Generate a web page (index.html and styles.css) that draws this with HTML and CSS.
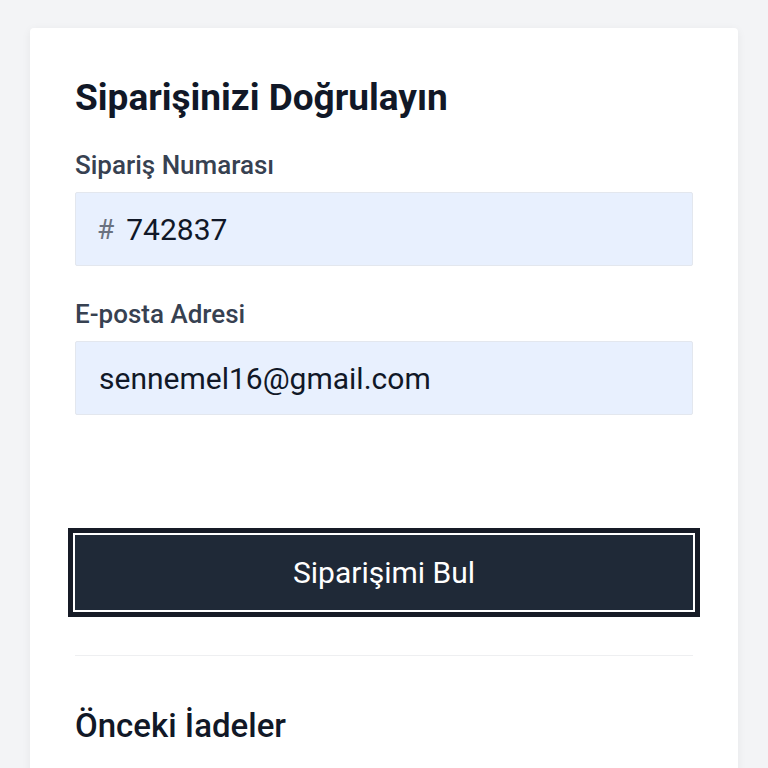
FILE: index.html
```html
<!DOCTYPE html>
<html lang="tr">
<head>
<meta charset="utf-8">
<title>Siparişinizi Doğrulayın</title>
<link rel="stylesheet" href="styles.css">
</head>
<body>
<main class="card">
  <h1 class="title">Siparişinizi Doğrulayın</h1>
  <form class="form">
    <label class="field">
      <span class="label">Sipariş Numarası</span>
      <span class="control">
        <span class="prefix">#</span>
        <input class="input" type="text" value="742837">
      </span>
    </label>
    <label class="field">
      <span class="label">E-posta Adresi</span>
      <span class="control">
        <input class="input" type="email" value="sennemel16@gmail.com">
      </span>
    </label>
    <button class="button" type="button">Siparişimi Bul</button>
  </form>
  <hr class="divider">
  <h2 class="subtitle">Önceki İadeler</h2>
</main>
</body>
</html>
```

FILE: styles.css
```css
* { box-sizing: border-box; }
html, body { margin: 0; height: 100%; }
body {
  background: #f3f4f6;
  font-family: Roboto, "Noto Sans", "Liberation Sans", sans-serif;
  padding: 28px 30px 0;
  overflow: hidden;
}
.card {
  background: #ffffff;
  border-radius: 4px;
  box-shadow: 0 2px 10px rgba(17, 24, 39, 0.06);
  padding: 48px 45px 60px;
  min-height: 800px;
}
.title {
  margin: 0;
  font-size: 37px;
  line-height: 44.4px;
  font-weight: 700;
  color: #111827;
}
.form {
  display: flex;
  flex-direction: column;
  margin-top: 30px;
}
.field {
  display: flex;
  flex-direction: column;
  gap: 12px;
  margin-bottom: 33px;
}
.field:last-of-type { margin-bottom: 0; }
.label {
  font-size: 26px;
  line-height: 30px;
  font-weight: 500;
  color: #374151;
}
.control {
  display: flex;
  align-items: center;
  height: 74px;
  padding: 0 23px;
  background: #e8f0fe;
  border: 1px solid #e3e7ee;
  border-radius: 2px;
}
.prefix {
  font-size: 28px;
  color: #6b7280;
  margin-right: 12px;
  margin-left: -2px;
}
.input {
  flex: 1;
  min-width: 0;
  border: 0;
  outline: 0;
  background: transparent;
  padding: 0;
  font-family: inherit;
  font-size: 30px;
  color: #111827;
}
.button {
  margin-top: 120px;
  height: 75px;
  border: 0;
  border-radius: 0;
  background: #1f2937;
  color: #ffffff;
  font-family: inherit;
  font-size: 30px;
  font-weight: 400;
  box-shadow: 0 0 0 2px #ffffff, 0 0 0 7px #161b26;
}
.divider {
  margin: 45px 0 0;
  border: 0;
  border-top: 1px solid #eeeff1;
}
.subtitle {
  margin: 50px 0 0;
  font-size: 33px;
  line-height: 39.6px;
  font-weight: 500;
  color: #111827;
}
```
